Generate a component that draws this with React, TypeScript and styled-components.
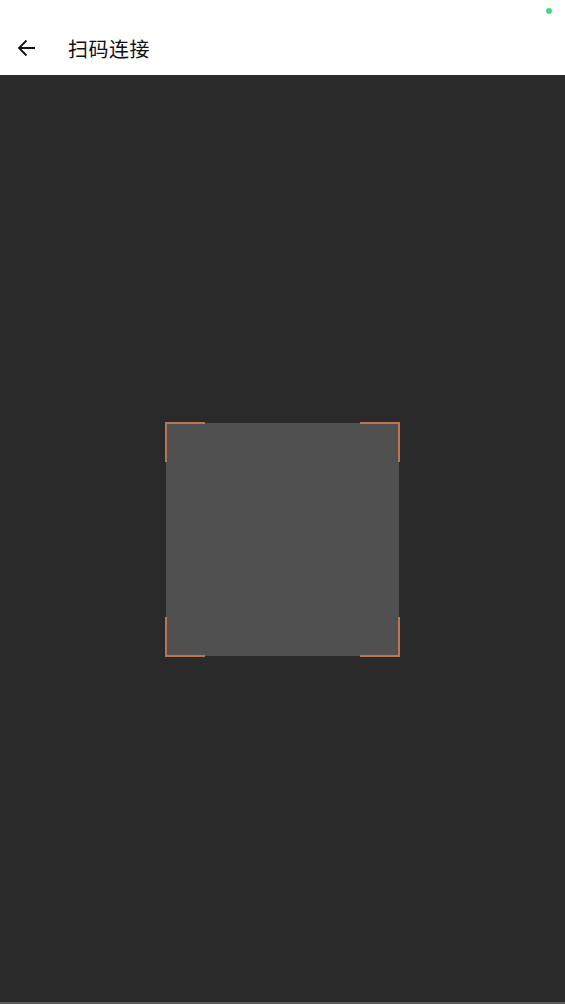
import styled, { createGlobalStyle } from 'styled-components'

const GlobalStyle = createGlobalStyle`
  html, body { margin: 0; padding: 0; background: #2a2a2a; }
  body { font-family: "Noto Sans CJK SC", "Noto Sans", sans-serif; }
  #root { height: 1004px; }
`

type Pos = 'tl' | 'tr' | 'bl' | 'br'

function App() {
  return (
    <Page>
      <GlobalStyle />
      <Header>
        <StatusBar>
          <Dot />
        </StatusBar>
        <TitleRow>
          <BackButton aria-label="back">
            <svg width="20" height="20" viewBox="0 0 20 20" fill="none">
              <path d="M18 10H2.5M9.5 2.5L2 10l7.5 7.5" stroke="#111" strokeWidth="1.8" />
            </svg>
          </BackButton>
          <Title>扫码连接</Title>
        </TitleRow>
      </Header>
      <Scanner>
        <Frame>
          <Viewport />
          {(['tl', 'tr', 'bl', 'br'] as Pos[]).map(p => <Corner key={p} pos={p} />)}
        </Frame>
      </Scanner>
      <BottomLine />
    </Page>
  )
}

export default App

const Page = styled.div`
  height: 1004px;
  display: flex;
  flex-direction: column;
`
const Header = styled.header`
  background: #fff;
  height: 75px;
  display: flex;
  flex-direction: column;
`
const StatusBar = styled.div`
  height: 22px;
  display: flex;
  justify-content: flex-end;
  align-items: center;
  padding-right: 13px;
`
const Dot = styled.span`
  width: 6px;
  height: 6px;
  border-radius: 50%;
  background: #3ddc84;
`
const TitleRow = styled.div`
  flex: 1;
  display: flex;
  align-items: center;
  padding-left: 17px;
  padding-bottom: 1px;
`
const BackButton = styled.button`
  border: 0;
  background: none;
  padding: 0;
  width: 20px;
  height: 20px;
  display: flex;
  margin-right: 31px;
`
const Title = styled.h1`
  margin: 0;
  font-size: 20px;
  font-weight: 400;
  color: #111;
  letter-spacing: 0.5px;
`
const Scanner = styled.main`
  flex: 1;
  background: #2a2a2a;
  display: flex;
  align-items: center;
  justify-content: center;
  padding-top: 2px;
`
const Frame = styled.div`
  position: relative;
  width: 235px;
  height: 235px;
  padding: 1px;
  box-sizing: border-box;
`
const Viewport = styled.div`
  width: 100%;
  height: 100%;
  background: #505050;
`
const Corner = styled.span<{ pos: Pos }>`
  position: absolute;
  width: 40px;
  height: 40px;
  box-sizing: border-box;
  border: 0 solid #bd7450;
  ${p => (p.pos[0] === 't' ? 'top: 0; border-top-width: 2px;' : 'bottom: 0; border-bottom-width: 2px;')}
  ${p => (p.pos[1] === 'l' ? 'left: 0; border-left-width: 2px;' : 'right: 0; border-right-width: 2px;')}
`
const BottomLine = styled.div`
  height: 2px;
  background: #5c5c5c;
`
